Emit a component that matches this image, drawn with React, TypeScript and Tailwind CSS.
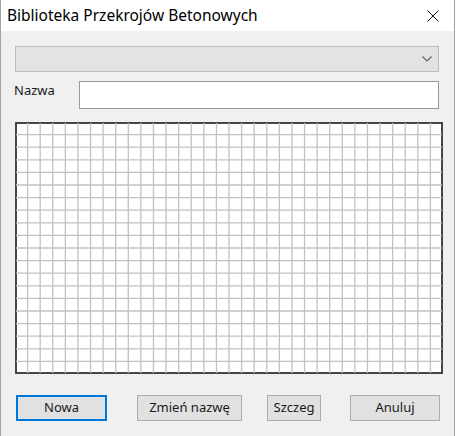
import React from "react";

const COLS = 34;
const ROWS = 20;
const GRID_W = 428;
const GRID_H = 252;

const SectionGrid: React.FC = () => {
  const dx = GRID_W / COLS;
  const dy = GRID_H / ROWS;
  const verticals = Array.from({ length: COLS - 1 }, (_, i) => (i + 1) * dx);
  const horizontals = Array.from({ length: ROWS - 1 }, (_, i) => (i + 1) * dy);

  return (
    <svg
      width={GRID_W}
      height={GRID_H}
      viewBox={`0 0 ${GRID_W} ${GRID_H}`}
      className="block bg-white"
    >
      <rect
        x={1}
        y={1}
        width={GRID_W - 2}
        height={GRID_H - 2}
        fill="white"
        stroke="#333333"
        strokeWidth={1.8}
      />
      {verticals.map((x) => (
        <line key={`v${x}`} x1={x} y1={1} x2={x} y2={GRID_H - 1} stroke="#c2c2c2" strokeWidth={1.3} />
      ))}
      {horizontals.map((y) => (
        <line key={`h${y}`} x1={1} y1={y} x2={GRID_W - 1} y2={y} stroke="#c2c2c2" strokeWidth={1.3} />
      ))}
    </svg>
  );
};

const WinButton: React.FC<{ label: string; className?: string; focused?: boolean }> = ({
  label,
  className = "",
  focused,
}) => (
  <button
    className={`h-[26px] bg-[#e1e1e1] text-[13px] text-[#1a1a1a] flex items-center justify-center ${
      focused ? "border-2 border-[#0078d7]" : "border border-[#adadad]"
    } ${className}`}
  >
    {label}
  </button>
);

export default function App() {
  return (
    <div
      className="w-[456px] h-[436px] bg-white flex"
      style={{ fontFamily: '"Noto Sans", "Open Sans", sans-serif' }}
    >
      <div className="w-[455px] h-full flex flex-col border-x border-[#a3a3a3]">
        {/* title bar */}
        <div className="h-[31px] bg-white flex items-center justify-between shrink-0">
          <span className="pl-[6px] text-[15.5px] text-black leading-none">
            Biblioteka Przekrojów Betonowych
          </span>
          <svg width="12" height="12" viewBox="0 0 12 12" className="mr-[15px]">
            <path d="M0.5 0.5 L11.5 11.5 M11.5 0.5 L0.5 11.5" stroke="#111" strokeWidth="1" fill="none" />
          </svg>
        </div>

        {/* body */}
        <div className="flex-1 bg-[#f0f0f0] flex flex-col">
          {/* combo box */}
          <div className="mt-[15px] ml-[14px] w-[424px] h-[26px] bg-[#e3e3e3] border border-[#bdbdbd] flex items-center justify-end pr-[6px]">
            <svg width="10" height="6" viewBox="0 0 10 6">
              <path d="M0.5 0.5 L5 5 L9.5 0.5" stroke="#606060" strokeWidth="1.1" fill="none" />
            </svg>
          </div>

          {/* name row */}
          <div className="mt-[9px] flex items-start">
            <span className="ml-[13px] w-[65px] pt-[3px] text-[13px] text-[#1a1a1a] leading-none">Nazwa</span>
            <input
              className="w-[360px] h-[28px] bg-white border border-[#9a9a9a] outline-none px-1 text-[13px]"
              defaultValue=""
            />
          </div>

          {/* drawing area */}
          <div className="mt-[13px] ml-[14px]">
            <SectionGrid />
          </div>

          {/* buttons */}
          <div className="mt-[21px] flex">
            <WinButton label="Nowa" focused className="ml-[15px] w-[91px]" />
            <WinButton label="Zmień nazwę" className="ml-[30px] w-[105px]" />
            <WinButton label="Szczeg" className="ml-[25px] w-[54px]" />
            <WinButton label="Anuluj" className="ml-[29px] w-[90px]" />
          </div>
        </div>
      </div>
    </div>
  );
}
